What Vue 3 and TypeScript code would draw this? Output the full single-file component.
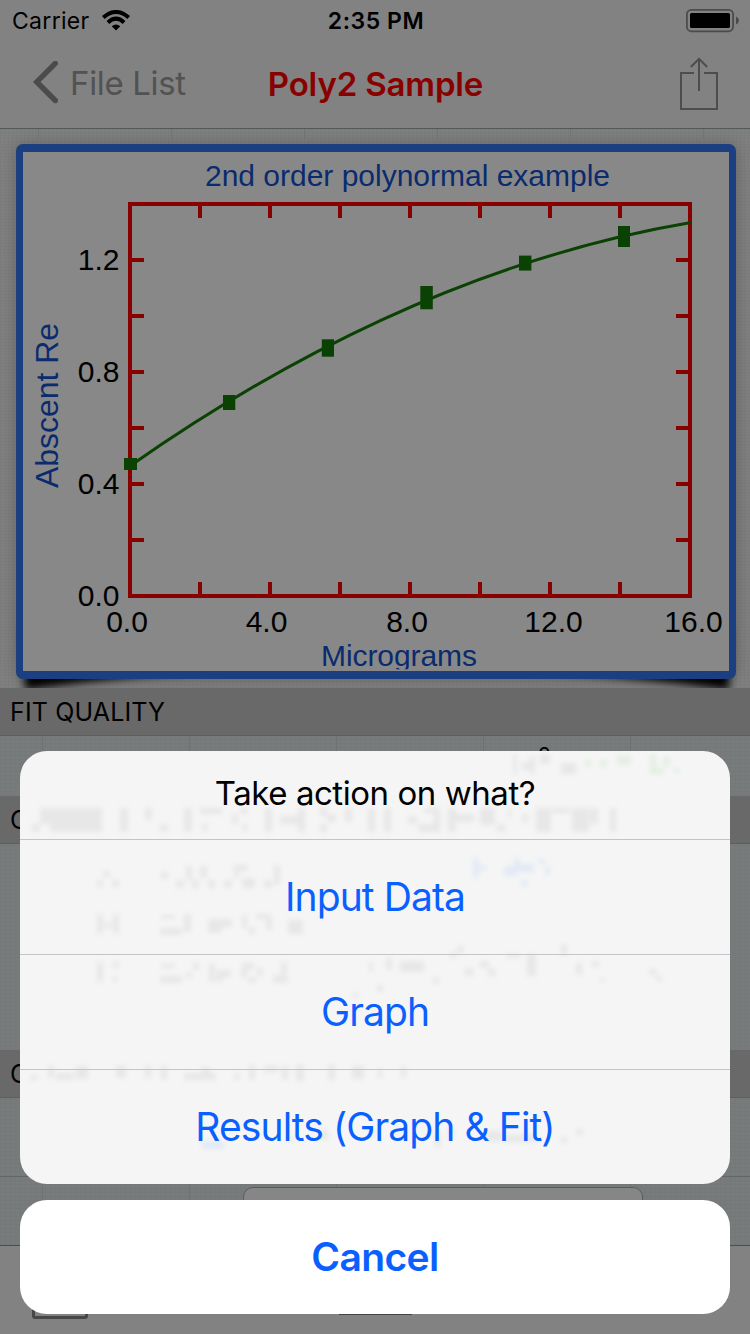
<script setup lang="ts">
type Box = [number, number, number, number]

const xTicks: number[] = [200, 270, 340, 410, 480, 550, 620]
const yTicks: number[] = [260, 316, 372, 428, 484, 540]

const markers: Box[] = [
  [124, 458, 13, 12],
  [223, 395, 12.3, 15],
  [321.8, 339.3, 12.2, 17.4],
  [420.3, 286, 12.5, 23.3],
  [519, 255.6, 12.4, 15],
  [618, 226, 12, 21],
]

const yLabels = [
  { text: '1.2', y: 270 },
  { text: '0.8', y: 382 },
  { text: '0.4', y: 494 },
  { text: '0.0', y: 606 },
]
const xLabels = [
  { text: '0.0', x: 127 },
  { text: '4.0', x: 266.5 },
  { text: '8.0', x: 407 },
  { text: '12.0', x: 553.5 },
  { text: '16.0', x: 693.5 },
]

const darkGhosts: Box[] = [
  [513, 754, 4, 20], [522, 762, 8, 8], [530, 756, 5, 18], [540, 754, 10, 10], [561, 763, 15, 11],
  [40, 808, 62, 16], [32, 824, 8, 8], [50, 824, 52, 8], [120, 808, 8, 24], [145, 808, 7, 12],
  [160, 824, 8, 8], [184, 808, 8, 24], [200, 808, 22, 6], [202, 824, 6, 7], [240, 808, 8, 6],
  [232, 814, 6, 10], [242, 824, 6, 7], [265, 808, 7, 24], [280, 816, 18, 8], [298, 808, 7, 24],
  [320, 808, 7, 8], [327, 814, 9, 8], [320, 824, 7, 8], [345, 808, 7, 14], [368, 808, 7, 24],
  [384, 808, 7, 24], [408, 816, 9, 8], [424, 808, 10, 5], [434, 808, 6, 24], [418, 824, 16, 8],
  [448, 808, 8, 24], [456, 814, 18, 8], [480, 808, 15, 17], [497, 824, 8, 8], [508, 808, 3, 10],
  [522, 814, 6, 8], [536, 808, 15, 24], [552, 808, 18, 5], [572, 808, 17, 24], [590, 808, 8, 16],
  [610, 808, 6, 24],
  [103, 871, 7, 6], [97, 880, 6, 7], [112, 880, 7, 7], [161, 872, 7, 7], [176, 880, 8, 8],
  [186, 866, 6, 14], [192, 880, 7, 8], [200, 866, 7, 12], [208, 880, 7, 8], [224, 880, 8, 8],
  [233, 865, 15, 6], [234, 872, 5, 6], [242, 878, 13, 10], [264, 880, 8, 8], [274, 865, 6, 20],
  [97, 914, 6, 20], [113, 914, 6, 20], [104, 923, 8, 5], [161, 915, 14, 4], [160, 928, 22, 7],
  [184, 914, 7, 18], [208, 919, 14, 14], [220, 919, 12, 8], [242, 915, 5, 14], [249, 927, 6, 7],
  [256, 914, 15, 5], [266, 918, 6, 12], [288, 920, 15, 14],
  [97, 962, 6, 20], [113, 962, 6, 6], [113, 976, 4, 6], [161, 964, 14, 4], [160, 976, 22, 7],
  [186, 972, 6, 6], [193, 963, 6, 7], [209, 964, 6, 18], [217, 970, 14, 7], [217, 977, 6, 5],
  [242, 963, 12, 7], [241, 969, 6, 9], [248, 977, 8, 6], [257, 968, 6, 8], [281, 962, 6, 12],
  [273, 975, 15, 8], [369, 962, 4, 10], [386, 958, 6, 12], [400, 961, 24, 11], [433, 978, 6, 6],
  [450, 952, 6, 6], [457, 946, 7, 7], [465, 968, 8, 8], [480, 961, 9, 7], [488, 969, 8, 7],
  [506, 954, 14, 4], [527, 954, 9, 22], [561, 944, 6, 11], [576, 963, 6, 12], [592, 961, 7, 6],
  [600, 978, 5, 4], [649, 969, 8, 6], [656, 976, 6, 5], [377, 985, 6, 7], [353, 993, 5, 5],
  [30, 1075, 8, 5], [48, 1066, 6, 12], [56, 1073, 18, 7], [76, 1066, 12, 13], [116, 1066, 10, 12],
  [145, 1066, 6, 12], [161, 1066, 6, 14], [184, 1073, 32, 7], [202, 1067, 8, 8], [234, 1073, 6, 7],
  [249, 1065, 6, 15], [264, 1066, 14, 6], [282, 1066, 6, 14], [296, 1065, 8, 16], [328, 1065, 7, 15],
  [352, 1066, 12, 13], [378, 1068, 4, 10], [401, 1066, 5, 12],
  [289, 1137, 5, 5], [320, 1130, 8, 10], [370, 1130, 5, 6], [435, 1133, 5, 15], [448, 1129, 6, 8],
  [486, 1131, 16, 10], [504, 1135, 34, 7], [561, 1137, 6, 6], [576, 1129, 7, 6],
]
const blueGhosts: Box[] = [
  [473, 858, 6, 20], [480, 865, 6, 6], [504, 866, 13, 10], [514, 858, 6, 14], [518, 864, 16, 8],
  [521, 880, 7, 6], [538, 859, 7, 5], [545, 866, 5, 9], [202, 1141, 22, 8],
]
const greenGhosts: Box[] = [
  [585, 760, 6, 7], [600, 760, 7, 7], [617, 756, 14, 9], [650, 754, 6, 20], [650, 768, 14, 6],
  [663, 757, 7, 9], [674, 768, 5, 5],
]
const actions: string[] = ['Input Data', 'Graph', 'Results (Graph & Fit)']
</script>

<template>
  <div class="screen">
    <header class="top">
      <div class="status">
        <div class="carrier">
          <span>Carrier</span>
          <svg width="30" height="22" viewBox="0 0 30 22">
            <path d="M15 20.6 L10.7 16.2 Q15 12.6 19.3 16.2 Z" fill="#000" />
            <path d="M6.9 12.4 Q15 5 23.1 12.4" fill="none" stroke="#000" stroke-width="4" />
            <path d="M2.3 7.6 Q15 -3.6 27.7 7.6" fill="none" stroke="#000" stroke-width="4" />
          </svg>
        </div>
        <div class="clock">2:35 PM</div>
        <svg class="battery" width="54" height="24" viewBox="0 0 54 24">
          <rect x=".9" y=".9" width="46.2" height="21.4" rx="4.5" fill="none" stroke="#4b4b4b" stroke-width="1.8" />
          <rect x="4" y="4" width="40" height="15" rx="1.6" />
          <path d="M50 7.5 Q53 9 53 11.5 Q53 14 50 15.5 Z" fill="#4b4b4b" />
        </svg>
      </div>
      <div class="nav">
        <div class="back">
          <svg width="28" height="44" viewBox="32 61.5 28 44">
            <path d="M55.3 63.8 L36.8 82.4 L55.3 101" fill="none" stroke="#4b4b4b" stroke-width="5.4" stroke-linecap="round" />
          </svg>
          <span>File List</span>
        </div>
        <h1>Poly2 Sample</h1>
        <svg class="share" width="40" height="54" viewBox="679 57 40 54" fill="none" stroke="#4d4d4d" stroke-width="2">
          <path d="M694 73 H681 V109 H717 V73 H704" />
          <path d="M699 91 V58.5 M690.8 67 L699 58.8 L707.2 67" />
        </svg>
      </div>
    </header>

    <section class="plot-area">
      <svg class="curl" width="750" height="70" viewBox="0 0 750 70">
        <defs>
          <filter id="soft" x="-5%" y="-40%" width="110%" height="180%"><feGaussianBlur stdDeviation="4" /></filter>
        </defs>
        <path d="M23 10 L25 72 Q375 22 729 72 L730 10 Z" filter="url(#soft)" />
      </svg>
      <div class="card">
        <svg width="706" height="519" viewBox="23 152 706 519">
          <g class="blue">
            <text x="205" y="186" textLength="405">2nd order polynormal example</text>
            <text x="321" y="666" textLength="156">Micrograms</text>
            <text transform="translate(58 488) rotate(-90)" class="big" textLength="165">Abscent Re</text>
          </g>
          <rect x="321" y="669.3" width="160" height="3" fill="#888" />
          <text v-for="l in yLabels" :key="'y' + l.y" x="119.5" :y="l.y" text-anchor="end">{{ l.text }}</text>
          <text v-for="l in xLabels" :key="'x' + l.x" :x="l.x" y="632" text-anchor="middle">{{ l.text }}</text>
          <g fill="none" stroke="#890000" stroke-width="4">
            <rect x="130" y="204" width="560" height="392" />
            <path v-for="x in xTicks" :key="'tx' + x" :d="`M${x} 204 V218 M${x} 582 V596`" />
            <path v-for="y in yTicks" :key="'ty' + y" :d="`M130 ${y} H144 M676 ${y} H690`" />
          </g>
          <path d="M130 466 Q410 270 691 222.6" fill="none" stroke="#0a4203" stroke-width="3" />
          <rect v-for="m in markers" :key="m[0]" :x="m[0]" :y="m[1]" :width="m[2]" :height="m[3]" fill="#0a4203" />
        </svg>
      </div>
    </section>

    <h2>FIT QUALITY</h2>
    <div class="cell quality"><sup>2</sup></div>
    <h2>C</h2>
    <div class="cell coefficients"></div>
    <h2>C</h2>
    <div class="cell covariance"></div>
    <div class="cell entry"><div class="field"></div></div>
    <footer>
      <div class="doc"></div>
      <div class="bar"></div>
    </footer>

    <div class="overlay">
      <div class="sheet">
        <svg class="ghosts" width="710" height="433" viewBox="20 751 710 433">
          <defs>
            <filter id="haze" x="-5%" y="-5%" width="110%" height="110%"><feGaussianBlur stdDeviation="2.5" /></filter>
          </defs>
          <g filter="url(#haze)">
            <rect v-for="(b, i) in darkGhosts" :key="'d' + i" :x="b[0]" :y="b[1]" :width="b[2]" :height="b[3]" fill="#e7e7e7" />
            <rect v-for="(b, i) in blueGhosts" :key="'b' + i" :x="b[0]" :y="b[1]" :width="b[2]" :height="b[3]" fill="#e2e9f6" />
            <rect v-for="(b, i) in greenGhosts" :key="'g' + i" :x="b[0]" :y="b[1]" :width="b[2]" :height="b[3]" fill="#e3eee2" />
          </g>
        </svg>
        <div class="prompt">Take action on what?</div>
        <button v-for="a in actions" :key="a" class="action">{{ a }}</button>
      </div>
      <button class="cancel">Cancel</button>
    </div>
  </div>
</template>

<style>
body { margin: 0; background: #828282; }
</style>

<style scoped>
* { box-sizing: border-box; }
.screen {
  position: relative; width: 750px; height: 1334px; overflow: hidden;
  display: flex; flex-direction: column; background: #777a7b;
  font-family: Inter, "Liberation Sans", sans-serif; color: #000;
}
.top { height: 129px; flex: none; background: #828282; border-bottom: 1px solid #535858; }
.status {
  height: 40px; display: grid; grid-template-columns: 1fr auto 1fr; align-items: center;
  padding: 0 10px 0 12px; font-size: 23px; line-height: 42px;
}
.carrier { display: flex; align-items: center; gap: 11px; letter-spacing: .3px; }
.clock { font-weight: 600; font-size: 23px; letter-spacing: .55px; }
.battery { justify-self: end; }
.nav {
  height: 88px; display: grid; grid-template-columns: 1fr auto 1fr; align-items: center; padding: 0 31px 0 32px;
}
.back { display: flex; align-items: center; gap: 10px; font-size: 33px; color: #525252; font-weight: 400; letter-spacing: -.35px; padding-bottom: 3px; }
.nav h1 { margin: 0; font-size: 33px; font-weight: 600; color: #890000; letter-spacing: -.15px; }
.share { justify-self: end; }
.plot-area {
  position: relative; height: 559px; flex: none; overflow: hidden; padding: 15px 14px 0 16px;
  background:
    repeating-linear-gradient(90deg, transparent 0 38px, rgba(50, 85, 100, .18) 38px 39px, transparent 39px 133px) 0 0 / 100% 9px no-repeat,
    repeating-linear-gradient(0deg, rgba(0, 0, 0, .02) 0 1px, transparent 1px 3px),
    repeating-linear-gradient(90deg, rgba(0, 0, 0, .02) 0 1px, transparent 1px 4px),
    #7f8080;
}
.curl { position: absolute; left: 0; top: 489px; }
.card {
  position: relative; width: 720px; height: 535px; background: #888;
  border: solid #1b3f80; border-width: 8px 7px; border-radius: 7px; box-shadow: 0 0 16px rgba(0, 0, 0, .22);
}
.card svg { display: block; }
.card text { font-family: "Liberation Sans", Arial, sans-serif; font-size: 30px; }
.card .blue text { fill: #0a2b6e; }
.card .blue .big { font-size: 32px; }
h2 {
  margin: 0; height: 48px; flex: none; padding-left: 10px; background: #696969;
  border-bottom: 1px solid #5c5f5f; font-size: 25px; line-height: 49px; font-weight: 400; letter-spacing: .15px;
}
.cell {
  flex: none; overflow: hidden;
  background:
    repeating-linear-gradient(90deg, transparent 0 42px, rgba(40, 65, 85, .15) 42px 43px, transparent 43px 147px),
    repeating-linear-gradient(90deg, rgba(0, 0, 0, .02) 0 1px, transparent 1px 5px),
    repeating-linear-gradient(0deg, rgba(0, 0, 0, .02) 0 1px, transparent 1px 4px),
    #787b7c;
}
.quality { height: 60px; padding: 8px 0 0 538px; }
.quality sup { display: block; font-size: 21px; line-height: 24px; }
.coefficients { height: 206px; }
.covariance { height: 79px; border-bottom: 1px solid #626565; }
.entry { height: 68px; padding-top: 10px; }
.field { margin-left: 243px; width: 400px; height: 58px; border: 1px solid #595c5c; border-radius: 10px; background: #868686; }
footer {
  flex: 1; background: #828282; border-top: 1px solid #4c4e4e;
  display: flex; align-items: flex-start; padding-left: 32px; gap: 251px;
}
.doc { width: 56px; height: 73px; border: 3px solid #474747; border-radius: 3px; }
.bar { width: 73px; height: 69px; border-bottom: 1px solid #444; }
.overlay {
  position: absolute; inset: 0; padding: 0 20px 20px;
  display: flex; flex-direction: column; justify-content: flex-end; gap: 16px;
}
.sheet { position: relative; border-radius: 27px; background: #f5f5f5; overflow: hidden; }
.ghosts { position: absolute; left: 0; top: 0; }
.prompt { position: relative; height: 88px; line-height: 85px; text-align: center; font-size: 33px; letter-spacing: -.45px; }
.action {
  position: relative; display: block; width: 100%; height: 115px; padding: 0; border: 0;
  border-top: 1px solid #c4c4c6; background: none; color: #0a60ff;
  font: 400 39px/114px Inter, sans-serif; letter-spacing: -.9px;
}
.cancel {
  height: 114px; flex: none; border: 0; padding: 0; border-radius: 27px; background: #fff; color: #0a60ff;
  font: 600 39px/112px Inter, sans-serif; letter-spacing: -.6px;
}
</style>
